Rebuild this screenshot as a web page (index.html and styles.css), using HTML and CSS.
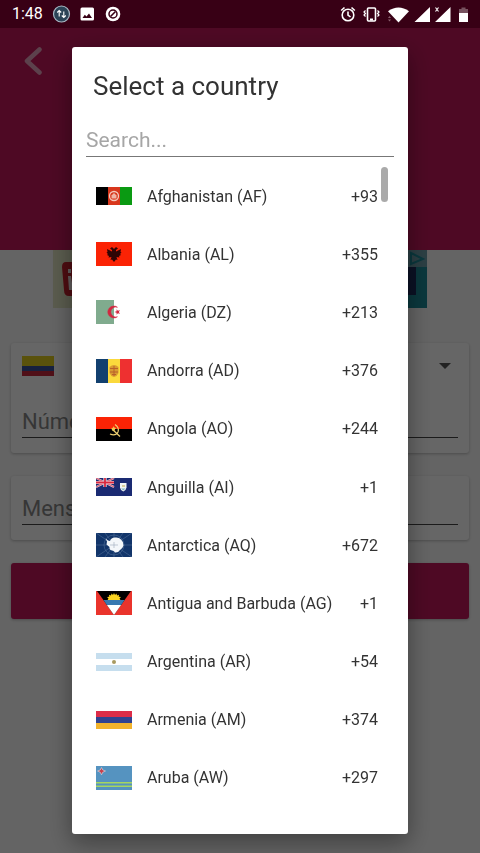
FILE: index.html
```html
<!DOCTYPE html>
<html lang="es">
<head>
<meta charset="utf-8">
<meta name="viewport" content="width=device-width, initial-scale=1">
<title>Select a country</title>
<link rel="stylesheet" href="styles.css">
</head>
<body>

<div class="statusbar">
	<span class="clock">1:48</span>
	<svg class="status-left" width="70" height="20" viewBox="0 0 70 20">
		<circle cx="9.500" cy="10" r="8" fill="#2c4457" stroke="#a9b8c4" stroke-width="1.200"/>
		<path d="M7.200 12.500V6.500M5.200 8.500l2-2 2 2M11.800 7.500v6M9.800 11.500l2 2 2-2" fill="none" stroke="#fff" stroke-width="1.100"/>
		<path fill-rule="evenodd" d="M30 3.500h10.500a1.500 1.500 0 0 1 1.500 1.500v10a1.500 1.500 0 0 1-1.500 1.500H30a1.500 1.500 0 0 1-1.500-1.500V5A1.500 1.500 0 0 1 30 3.500zM30.500 14H40l-3-4.500-2.500 3-1.700-1.800z" fill="#fff"/>
		<circle cx="61" cy="10" r="7.300" fill="#fff"/>
		<circle cx="61" cy="10" r="4" fill="none" stroke="#380015" stroke-width="1.500"/>
		<path d="M58.500 12.500l5-5" stroke="#380015" stroke-width="1.600"/>
	</svg>
	<svg class="status-right" width="130" height="20" viewBox="0 0 130 20">
		<g fill="none" stroke="#fff" stroke-width="1.600">
			<circle cx="8" cy="11" r="5.800"/>
			<path d="M8 7.500V11l2.500 2M1.200 6.500L4.500 3.500M14.800 6.500l-3.300-3"/>
			<rect x="27.500" y="4" width="8" height="13" rx="1"/>
			<path d="M30 15.500h3" stroke-width="2"/>
			<path d="M25.500 6.500l-1.500 1.500 1.500 1.500-1.500 1.500 1.500 1.500M37.500 6.500L39 8l-1.500 1.500L39 11l-1.500 1.500" stroke-width="1.200"/>
		</g>
		<path d="M48 7.200q10.500-7.500 21 0L58.500 18.500z" fill="#fff"/>
		<path d="M48 14l1.500-2 1.500 2zM48 15.500l1.500 2 1.500-2z" fill="#8a5f6e"/>
		<path d="M90 3v15H74.500zM110.500 3v15H95z" fill="#fff"/>
		<path d="M95.500 3.500l3 4M98.500 3.500l-3 4" stroke="#fff" stroke-width="1.100"/>
		<path d="M119 5h2.500V3.500h4V5h2.500v4h-9z" fill="#77525f"/>
		<path d="M119 9h9v9h-9z" fill="#fff"/>
	</svg>
</div>

<header class="header">
	<button class="back" type="button" aria-label="Volver">
		<svg width="18" height="28" viewBox="0 0 18 28">
			<path d="M15.500 2.500L3 14l12.500 11.500" fill="none" stroke="#fff" stroke-width="4.500" stroke-linecap="round" stroke-linejoin="round"/>
		</svg>
	</button>
</header>

<main>
	<div class="ad">
		<svg width="20" height="58" viewBox="0 0 20 58">
			<rect width="20" height="58" fill="#e2e6c4"/>
			<path d="M20 12h-7q-4 0-4 5l2 23q0 6 5 6h4z" fill="#c4202c"/>
			<path d="M15 19h3v4h-3zM15 26h3l2 14h-4z" fill="#f4e8e8"/>
		</svg>
		<svg width="20" height="58" viewBox="0 0 20 58">
			<rect width="20" height="58" fill="#1b8b99"/>
			<rect width="20" height="17" fill="#6f9fab"/>
			<rect y="17" width="9" height="28" fill="#1c2c5c"/>
			<path d="M4 3l12 6L4 14z" fill="none" stroke="#1b8b99" stroke-width="2"/>
		</svg>
	</div>

	<form class="form">
		<div class="card">
			<div class="prefix">
				<svg class="flag-co" width="32" height="20" viewBox="0 0 32 20">
					<rect width="32" height="20" fill="#c8283c"/>
					<rect width="32" height="15" fill="#3a549c"/>
					<rect width="32" height="10" fill="#e0cc1e"/>
				</svg>
				<select class="prefix-select" aria-label="País">
					<option>Colombia (+57)</option>
				</select>
				<svg width="12" height="6" viewBox="0 0 12 6"><path d="M0 0h12L6 6z" fill="#555"/></svg>
			</div>
			<input class="field" type="tel" placeholder="Número" aria-label="Número">
		</div>
		<div class="card card-message">
			<input class="field" type="text" placeholder="Mensaje" aria-label="Mensaje">
		</div>
		<button class="send" type="button" aria-label="Enviar"></button>
	</form>
</main>

<div class="overlay">
	<section class="dialog" role="dialog" aria-labelledby="dialog-title">
		<h1 class="dialog-title" id="dialog-title">Select a country</h1>
		<input class="search" type="text" placeholder="Search..." aria-label="Search">
		<ul class="countries">
			<li><button class="country" type="button">
				<svg class="flag" width="36" height="18" viewBox="0 0 36 18">
					<rect width="12" height="18" fill="#000"/>
					<rect x="12" width="12" height="18" fill="#d8371c"/>
					<rect x="24" width="12" height="18" fill="#0a9a12"/>
					<circle cx="18" cy="9" r="4.500" fill="none" stroke="#f3c9bd" stroke-width="1.300"/>
					<path d="M15.500 11.500v-3L18 6l2.500 2.500v3z" fill="#eeb5a6"/>
				</svg>
				<span class="name">Afghanistan (AF)</span><span class="code">+93</span>
			</button></li>
			<li><button class="country" type="button">
				<svg class="flag" width="36" height="24" viewBox="0 0 36 24">
					<rect width="36" height="24" fill="#fb2305"/>
					<path d="M18 7l-2-2-2 1.500 2 1.500v1.500L11 7l.5 3-1 .5 1.500 1.500-1 1 2 1-.5 1.500 3-.5-1 3 1.500-.5L18 20l2-2.500 1.500.5-1-3 3 .5-.5-1.500 2-1-1-1 1.500-1.500-1-.5.5-3-5 2.500V8l2-1.500L20 5z" fill="#300505"/>
				</svg>
				<span class="name">Albania (AL)</span><span class="code">+355</span>
			</button></li>
			<li><button class="country" type="button">
				<svg class="flag" width="36" height="24" viewBox="0 0 36 24">
					<rect width="36" height="24" fill="#fff"/>
					<rect width="18" height="24" fill="#80ab8e"/>
					<path d="M21.500 7.300a6 6 0 1 0 0 9.400 5 5 0 1 1 0-9.400z" fill="#d22840" stroke="#d22840" stroke-width=".5"/>
					<path d="M18.500 12l2.100-.7V9.200l1.300 1.600 2.100-.6-1.200 1.800 1.200 1.800-2.100-.6-1.300 1.600v-2.100z" fill="#d22840"/>
				</svg>
				<span class="name">Algeria (DZ)</span><span class="code">+213</span>
			</button></li>
			<li><button class="country" type="button">
				<svg class="flag" width="36" height="24" viewBox="0 0 36 24">
					<rect width="12" height="24" fill="#12406f"/>
					<rect x="12" width="12" height="24" fill="#fbd93c"/>
					<rect x="24" width="12" height="24" fill="#ee3030"/>
					<path d="M13.500 8q4.500-4 9 0v6q-1 3-4.500 4-3.500-1-4.500-4z" fill="#d99a32"/>
					<path d="M14 9.500h8M14 13h8M18 7v10M16 15.500h4" stroke="#b9602a" fill="none"/>
				</svg>
				<span class="name">Andorra (AD)</span><span class="code">+376</span>
			</button></li>
			<li><button class="country" type="button">
				<svg class="flag" width="36" height="24" viewBox="0 0 36 24">
					<rect width="36" height="24" fill="#000"/>
					<rect width="36" height="12" fill="#fb2305"/>
					<path d="M19 7.500q4.500 3 3 7.500-2.500 4.500-8 2M16 12l8 7.500" fill="none" stroke="#eed070" stroke-width="1.200"/>
					<path d="M15 11l2-.3.800-1.700.7 1.800 1.800.2-1.500 1.200.4 1.800-1.500-1-1.600 1 .4-1.800z" fill="#f3c94f"/>
				</svg>
				<span class="name">Angola (AO)</span><span class="code">+244</span>
			</button></li>
			<li><button class="country" type="button">
				<svg class="flag" width="36" height="18" viewBox="0 0 36 18">
					<rect width="36" height="18" fill="#1a2a72"/>
					<path d="M0 0l18 9M18 0L0 9" stroke="#e6c9d4" stroke-width="2"/>
					<path d="M0 0l18 9M18 0L0 9" stroke="#d23a52" stroke-width=".8"/>
					<path d="M9 0v9M0 4.500h18" stroke="#f4e6ea" stroke-width="3.200"/>
					<path d="M9 0v9M0 4.500h18" stroke="#d8283f" stroke-width="1.800"/>
					<path d="M24 5h6.500v4.500q-.5 3-3.200 4-2.800-1-3.300-4z" fill="#f2f5f3"/>
					<path d="M25 10.500h4.500l-2.200 2z" fill="#7fb5c5"/>
					<path d="M26 7h3v2h-3z" fill="#d8cf9c"/>
				</svg>
				<span class="name">Anguilla (AI)</span><span class="code">+1</span>
			</button></li>
			<li><button class="country" type="button">
				<svg class="flag" width="36" height="24" viewBox="0 0 36 24">
					<rect width="36" height="24" fill="#12356a"/>
					<g fill="none" stroke="#58779f" stroke-width=".5">
						<path d="M0 0l36 24M36 0L0 24M18 0v24M0 12h36M9 0l18 24M27 0L9 24"/>
						<circle cx="18" cy="12" r="10"/>
					</g>
					<path d="M9.500 5.500l2.500 2 2 .5Q15 4.500 19 4.500q4-.5 6 2 2.500 2 2.500 6-1 3.500-3.500 4.500-2 3-5 2.500-1-2-3-2-3-.5-2.500-3.500l-3-2.500.5-3z" fill="#f4f7fa"/>
					<path d="M14 12h8M18 9v6" stroke="#a7b3c2" stroke-width=".7"/>
				</svg>
				<span class="name">Antarctica (AQ)</span><span class="code">+672</span>
			</button></li>
			<li><button class="country" type="button">
				<svg class="flag" width="36" height="24" viewBox="0 0 36 24">
					<rect width="36" height="24" fill="#ea342c"/>
					<path d="M1 0h34L18 24z" fill="#000"/>
					<path d="M7.400 9h21.200l-3.500 5H10.900z" fill="#3878b0"/>
					<path d="M10.900 14h14.200L18 24z" fill="#fff"/>
					<path d="M11.500 9l1-1.500-1.500-1.500 2.300-.2-.3-2 2 .8.500-2 1.500 1.500 1-2 1 2 1.500-1.500.5 2 2-.8-.3 2 2.300.2-1.500 1.500 1 1.500z" fill="#fbd521"/>
				</svg>
				<span class="name">Antigua and Barbuda (AG)</span><span class="code">+1</span>
			</button></li>
			<li><button class="country" type="button">
				<svg class="flag" width="36" height="18" viewBox="0 0 36 18">
					<rect width="36" height="18" fill="#c6deee"/>
					<rect y="6" width="36" height="6" fill="#fff"/>
					<circle cx="18" cy="9" r="2" fill="#a89a60"/>
				</svg>
				<span class="name">Argentina (AR)</span><span class="code">+54</span>
			</button></li>
			<li><button class="country" type="button">
				<svg class="flag" width="36" height="18" viewBox="0 0 36 18">
					<rect width="36" height="6" fill="#dc2c48"/>
					<rect y="6" width="36" height="6" fill="#2f4390"/>
					<rect y="12" width="36" height="6" fill="#f2b32c"/>
				</svg>
				<span class="name">Armenia (AM)</span><span class="code">+374</span>
			</button></li>
			<li><button class="country" type="button">
				<svg class="flag" width="36" height="24" viewBox="0 0 36 24">
					<rect width="36" height="24" fill="#5593c0"/>
					<path d="M0 16.700h36M0 20.200h36" stroke="#a6d660" stroke-width="1.500"/>
					<path d="M5.500 1.500L6.800 4l2.700 1-2.700 1.200-1.300 2.600-1.300-2.600L1.500 5l2.700-1z" fill="#c8404c" stroke="#d8dfe8" stroke-width=".6"/>
				</svg>
				<span class="name">Aruba (AW)</span><span class="code">+297</span>
			</button></li>
		</ul>
	</section>
</div>

</body>
</html>
```

FILE: styles.css
```css
* {
	box-sizing: border-box;
}
body {
	margin: 0;
	min-height: 100vh;
	background: #fafafa;
	font-family: Roboto, "Liberation Sans", sans-serif;
	color: #333;
}
button, input, select {
	font-family: inherit;
	border: 0;
	padding: 0;
	background: none;
}
svg {
	display: block;
	flex: none;
}

/* status bar stays above the dimmed page */
.statusbar {
	position: relative;
	z-index: 2;
	display: flex;
	align-items: center;
	height: 28px;
	padding: 0 10px 0 12px;
	background: #380015;
	color: #fff;
}
.clock {
	font-size: 16px;
	line-height: 28px;
}
.status-left {
	margin-left: 9px;
}
.status-right {
	margin-left: auto;
}

.header {
	height: 222px;
	padding: 19px 24px;
	background: #c2185b;
}
.back {
	display: block;
	opacity: .6;
}

.ad {
	display: flex;
	justify-content: space-between;
	height: 58px;
	margin: 0 53px;
}
.form {
	display: flex;
	flex-direction: column;
	gap: 23px;
	margin: 35px 11px 0;
}
.card {
	height: 110px;
	padding: 11px;
	border-radius: 3px;
	background: #fff;
	box-shadow: 0 1px 3px rgba(0, 0, 0, .25);
}
.card-message {
	height: 64px;
}
.prefix {
	display: flex;
	align-items: center;
	height: 24px;
	margin-bottom: 22px;
	padding-right: 7px;
}
.prefix-select {
	flex: 1;
	height: 24px;
	padding-left: 60px;
	appearance: none;
	font-size: 16px;
}
.field {
	display: block;
	width: 100%;
	height: 38px;
	padding-top: 5px;
	border-bottom: 1px solid #444;
	font-size: 22px;
}
.field::placeholder {
	color: #888;
}
.send {
	height: 56px;
	border-radius: 3px;
	background: #c2185b;
	box-shadow: 0 1px 3px rgba(0, 0, 0, .25);
}

.overlay {
	position: fixed;
	top: 0;
	right: 0;
	bottom: 0;
	left: 0;
	display: flex;
	padding: 47px 15% 19px;
	background: rgba(0, 0, 0, .6);
}
.dialog {
	display: flex;
	flex-direction: column;
	flex: 1;
	min-width: 0;
	padding: 19px 14px 27px;
	border-radius: 3px;
	background: #fff;
	box-shadow: 0 8px 24px rgba(0, 0, 0, .4);
}
.dialog-title {
	margin: 0 0 15px 7px;
	font-size: 26px;
	font-weight: 400;
	line-height: 40px;
}
.search {
	flex: none;
	height: 36px;
	padding-top: 3px;
	border-bottom: 1px solid #777;
	font-size: 21px;
}
.search::placeholder {
	color: #a6a6a6;
}
.countries {
	position: relative;
	display: flex;
	flex-direction: column;
	flex: 1;
	margin: 10px 0 0;
	padding: 0;
	list-style: none;
}
.countries li {
	display: flex;
	flex: 1;
}
/* scroll thumb */
.countries::after {
	content: "";
	position: absolute;
	top: 0;
	right: 6px;
	width: 7px;
	height: 35px;
	border-radius: 4px;
	background: #aaa;
}
.country {
	display: flex;
	align-items: center;
	flex: 1;
	padding: 0 16px 0 10px;
	color: #333;
	font-size: 16px;
	text-align: left;
}
.name {
	flex: 1;
	margin-left: 15px;
	white-space: nowrap;
}
```
